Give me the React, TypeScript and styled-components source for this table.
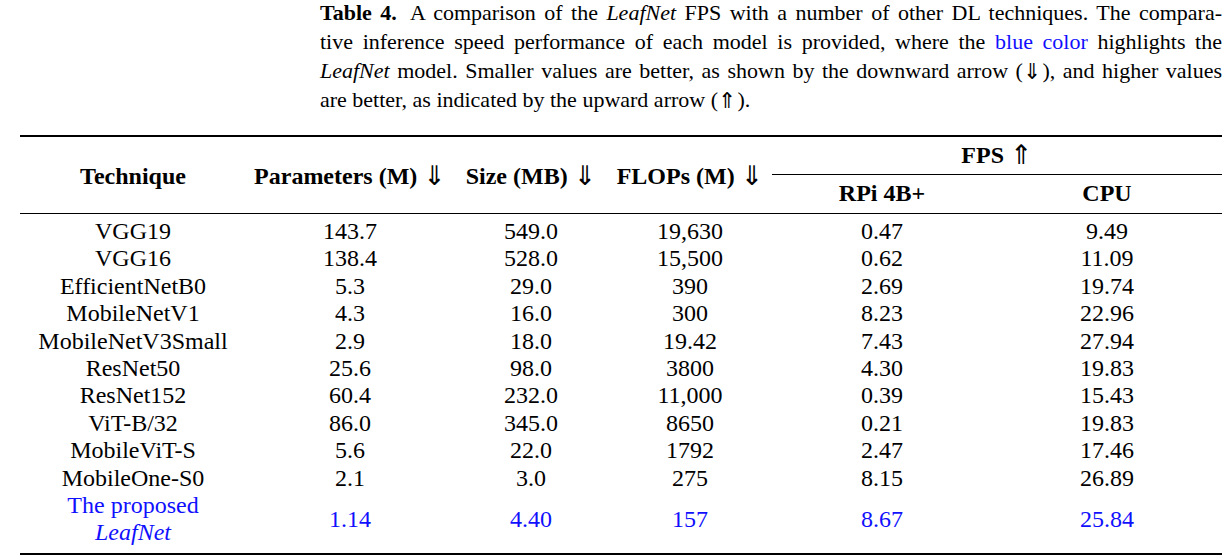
import React from 'react'
import styled, { createGlobalStyle } from 'styled-components'

const GlobalStyle = createGlobalStyle`
    html, body {
        margin: 0;
        padding: 0;
        background: #ffffff;
    }
    body {
        font-family: 'Liberation Serif', 'DejaVu Serif', serif;
        color: #000000;
    }
`

type Row = {
    name: string
    params: string
    size: string
    flops: string
    rpi: string
    cpu: string
}

const rows: Row[] = [
    { name: 'VGG19', params: '143.7', size: '549.0', flops: '19,630', rpi: '0.47', cpu: '9.49' },
    { name: 'VGG16', params: '138.4', size: '528.0', flops: '15,500', rpi: '0.62', cpu: '11.09' },
    { name: 'EfficientNetB0', params: '5.3', size: '29.0', flops: '390', rpi: '2.69', cpu: '19.74' },
    { name: 'MobileNetV1', params: '4.3', size: '16.0', flops: '300', rpi: '8.23', cpu: '22.96' },
    { name: 'MobileNetV3Small', params: '2.9', size: '18.0', flops: '19.42', rpi: '7.43', cpu: '27.94' },
    { name: 'ResNet50', params: '25.6', size: '98.0', flops: '3800', rpi: '4.30', cpu: '19.83' },
    { name: 'ResNet152', params: '60.4', size: '232.0', flops: '11,000', rpi: '0.39', cpu: '15.43' },
    { name: 'ViT-B/32', params: '86.0', size: '345.0', flops: '8650', rpi: '0.21', cpu: '19.83' },
    { name: 'MobileViT-S', params: '5.6', size: '22.0', flops: '1792', rpi: '2.47', cpu: '17.46' },
    { name: 'MobileOne-S0', params: '2.1', size: '3.0', flops: '275', rpi: '8.15', cpu: '26.89' },
]

const proposed = { params: '1.14', size: '4.40', flops: '157', rpi: '8.67', cpu: '25.84' }

const COLUMNS = '226px 208px 154px 164px 220px 230px'

const Page = styled.div`
    padding: 0 8px 0 20px;
`

const Caption = styled.div`
    margin: -2px 0 0 300px;
    width: 902px;
    font-size: 22px;
    line-height: 29px;
`

const CaptionLine = styled.div<{ $last?: boolean }>`
    text-align: ${(p) => (p.$last ? 'left' : 'justify')};
    text-align-last: ${(p) => (p.$last ? 'left' : 'justify')};
    white-space: nowrap;
`

const Label = styled.b`
    font-weight: 700;
    margin-right: 6px;
`

const Blue = styled.span`
    color: #1010ff;
`

const Table = styled.div`
    margin-top: 21px;
    width: 1202px;
    border-top: 2px solid #000;
    border-bottom: 2px solid #000;
    font-size: 24px;
    line-height: 27.4px;
    padding-bottom: 6px;
`

const Head = styled.div`
    display: grid;
    grid-template-columns: ${COLUMNS};
    grid-template-rows: 37px 1px 38px;
    border-bottom: 1px solid #000;
    margin-bottom: 4px;
    font-weight: 700;
`

const HeadCell = styled.div<{ $col: number; $span?: number; $row?: string }>`
    grid-column: ${(p) => p.$col} / span ${(p) => p.$span || 1};
    grid-row: ${(p) => p.$row || '1 / 4'};
    align-self: center;
    text-align: center;
    white-space: nowrap;
    padding-top: ${(p) => (p.$row ? '0' : '4px')};
`

const GroupRule = styled.div`
    grid-column: 5 / span 2;
    grid-row: 2;
    background: #000;
`

const Arrow = styled.span<{ $size?: number; $gap?: number }>`
    font-family: 'DejaVu Sans', sans-serif;
    font-weight: 400;
    font-size: ${(p) => p.$size || 27}px;
    line-height: 0;
    margin: 0 ${(p) => (p.$gap === undefined ? 0 : 1)}px 0 ${(p) => (p.$gap === undefined ? 6 : p.$gap)}px;
    position: relative;
    top: 1px;
`

const BodyRow = styled.div<{ $highlight?: boolean }>`
    display: grid;
    grid-template-columns: ${COLUMNS};
    align-items: center;
    color: ${(p) => (p.$highlight ? '#1010ff' : '#000')};
`

const Cell = styled.div`
    text-align: center;
    white-space: nowrap;
`

const App = () => {
    return (
        <Page>
            <GlobalStyle />
            <Caption>
                <CaptionLine>
                    <Label>Table 4.</Label> A comparison of the <i>LeafNet</i> FPS with a number of
                    other DL techniques. The compara-
                </CaptionLine>
                <CaptionLine>
                    tive inference speed performance of each model is provided, where the{' '}
                    <Blue>blue color</Blue> highlights the
                </CaptionLine>
                <CaptionLine>
                    <i>LeafNet</i> model. Smaller values are better, as shown by the downward arrow
                    (<Arrow $size={22} $gap={0}>⇓</Arrow>), and higher values
                </CaptionLine>
                <CaptionLine $last>
                    are better, as indicated by the upward arrow (<Arrow $size={22} $gap={0}>⇑</Arrow>).
                </CaptionLine>
            </Caption>
            <Table>
                <Head>
                    <HeadCell $col={1}>Technique</HeadCell>
                    <HeadCell $col={2}>
                        Parameters (M)<Arrow>⇓</Arrow>
                    </HeadCell>
                    <HeadCell $col={3}>
                        Size (MB)<Arrow>⇓</Arrow>
                    </HeadCell>
                    <HeadCell $col={4}>
                        FLOPs (M)<Arrow>⇓</Arrow>
                    </HeadCell>
                    <HeadCell $col={5} $span={2} $row="1">
                        FPS<Arrow>⇑</Arrow>
                    </HeadCell>
                    <GroupRule />
                    <HeadCell $col={5} $row="3">
                        RPi 4B+
                    </HeadCell>
                    <HeadCell $col={6} $row="3">
                        CPU
                    </HeadCell>
                </Head>
                {rows.map((r) => (
                    <BodyRow key={r.name}>
                        <Cell>{r.name}</Cell>
                        <Cell>{r.params}</Cell>
                        <Cell>{r.size}</Cell>
                        <Cell>{r.flops}</Cell>
                        <Cell>{r.rpi}</Cell>
                        <Cell>{r.cpu}</Cell>
                    </BodyRow>
                ))}
                <BodyRow $highlight>
                    <Cell>
                        The proposed
                        <br />
                        <i>LeafNet</i>
                    </Cell>
                    <Cell>{proposed.params}</Cell>
                    <Cell>{proposed.size}</Cell>
                    <Cell>{proposed.flops}</Cell>
                    <Cell>{proposed.rpi}</Cell>
                    <Cell>{proposed.cpu}</Cell>
                </BodyRow>
            </Table>
        </Page>
    )
}

export default App
